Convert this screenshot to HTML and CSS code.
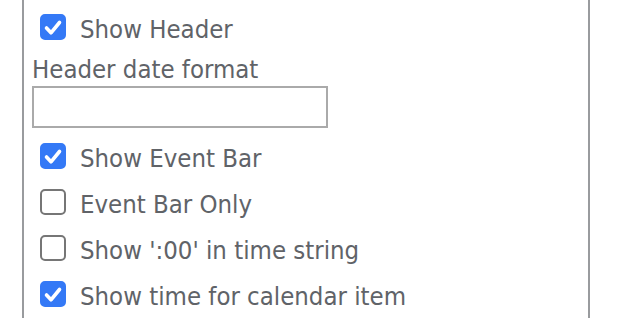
FILE: index.html
```html
<!DOCTYPE html>
<html>
<head>
    <title>Options</title>
    <meta name="viewport" content="width=device-width, initial-scale=1">
    <link rel="stylesheet" href="styles.css">
</head>
<body>
    <div class="panel">
        <label class="row">
            <input type="checkbox" checked>
            <span class="box"><svg viewBox="0 0 26 26"><polyline points="6.5,14 11,18.8 19.5,8.5"/></svg></span>
            <span class="text">Show Header</span>
        </label>
        <label class="field-label" for="date_format">Header date format</label>
        <input class="text-input" type="text" id="date_format">
        <label class="row">
            <input type="checkbox" checked>
            <span class="box"><svg viewBox="0 0 26 26"><polyline points="6.5,14 11,18.8 19.5,8.5"/></svg></span>
            <span class="text">Show Event Bar</span>
        </label>
        <label class="row">
            <input type="checkbox">
            <span class="box"><svg viewBox="0 0 26 26"><polyline points="6.5,14 11,18.8 19.5,8.5"/></svg></span>
            <span class="text">Event Bar Only</span>
        </label>
        <label class="row">
            <input type="checkbox">
            <span class="box"><svg viewBox="0 0 26 26"><polyline points="6.5,14 11,18.8 19.5,8.5"/></svg></span>
            <span class="text">Show ':00' in time string</span>
        </label>
        <label class="row">
            <input type="checkbox" checked>
            <span class="box"><svg viewBox="0 0 26 26"><polyline points="6.5,14 11,18.8 19.5,8.5"/></svg></span>
            <span class="text">Show time for calendar item</span>
        </label>
    </div>
</body>
</html>
```

FILE: styles.css
```css
html, body {
    margin: 0;
    height: 100%;
    background: #fff;
}
.panel {
    box-sizing: border-box;
    margin-left: 22px;
    width: 568px;
    min-height: 100%;
    padding: 4px 8px 0 8px;
    border-left: 2px solid #999b9e;
    border-right: 2px solid #999b9e;
    font-family: "DejaVu Sans Condensed", "DejaVu Sans", sans-serif;
    font-size: 25.5px;
    color: #606368;
}
.row {
    display: flex;
    align-items: center;
    height: 46px;
}
.row input {
    display: none;
}
.row .text {
    padding-top: 3px;
}
.box {
    box-sizing: border-box;
    width: 26px;
    height: 26px;
    margin: 0 14px 0 8px;
    border: 2px solid #767676;
    border-radius: 5px;
    background: #fff;
}
.box svg {
    display: none;
    width: 26px;
    height: 26px;
    margin: -2px;
}
.box polyline {
    fill: none;
    stroke: #fff;
    stroke-width: 3.6;
    stroke-linecap: round;
    stroke-linejoin: round;
}
.row input:checked + .box {
    border-color: #3479f6;
    background: #3479f6;
}
.row input:checked + .box svg {
    display: block;
}
.field-label {
    display: block;
    line-height: 30px;
    margin-top: 4px;
}
.text-input {
    display: block;
    box-sizing: border-box;
    width: 296px;
    height: 42px;
    margin: 2px 0 5px 0;
    border: 2px solid #aaaaaa;
    font-size: 24px;
}
```
